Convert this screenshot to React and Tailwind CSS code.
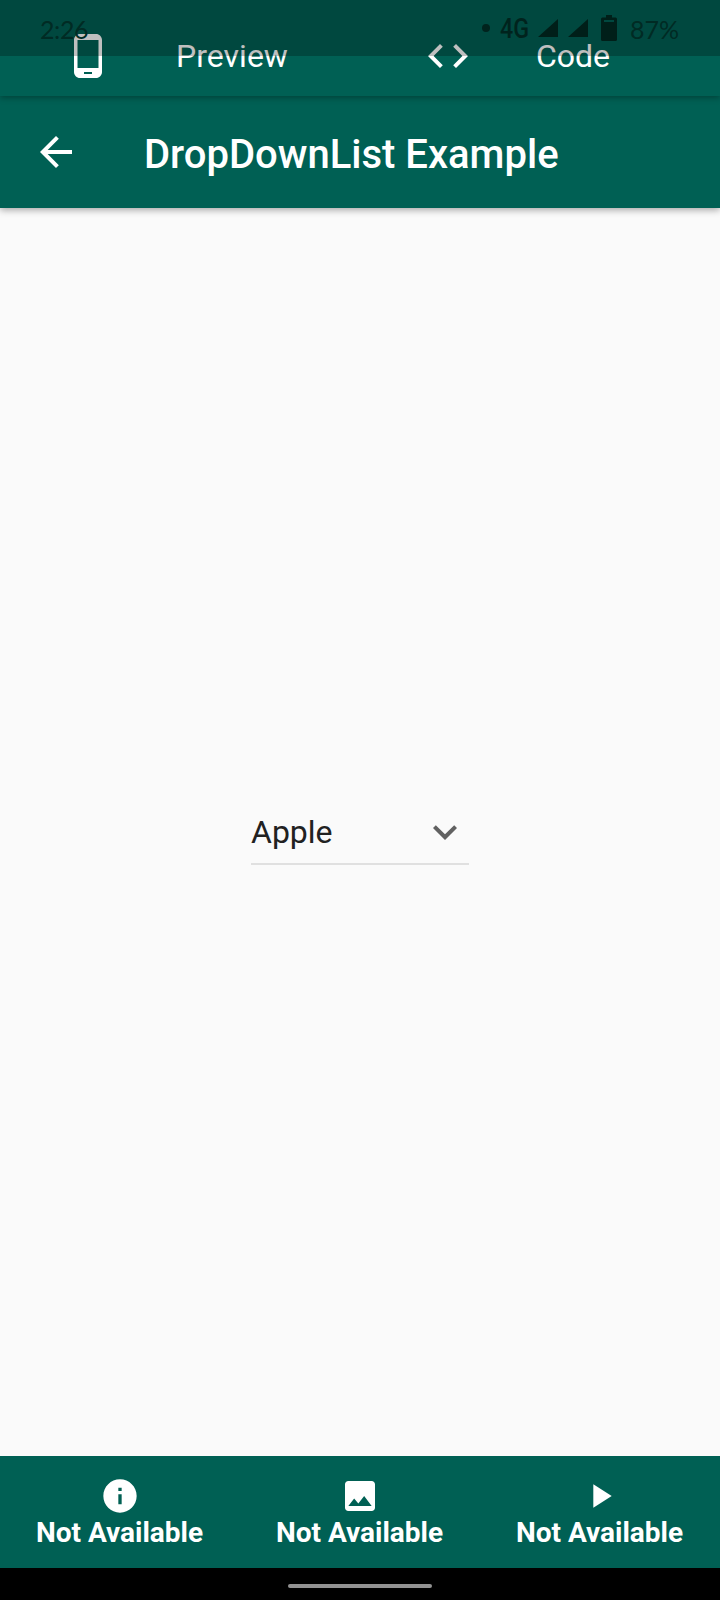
import React from "react";
import {
  MdPhoneAndroid,
  MdCode,
  MdArrowBack,
  MdExpandMore,
  MdInfo,
  MdImage,
  MdPlayArrow,
} from "react-icons/md";

function Signal() {
  return (
    <svg className="h-[18px] w-5" viewBox="0 0 20 18" fill="currentColor">
      <path d="M0 18 20 0v18z" />
    </svg>
  );
}

function StatusBar() {
  return (
    <div className="absolute inset-x-0 top-0 flex h-14 items-center bg-black/25 pl-10 pr-[41px] font-['Lato'] text-[#002b24]">
      <span className="mt-[2px] text-[25px] leading-none tracking-[-0.4px]">2:26</span>
      <div className="ml-auto flex items-center text-[#001f19]">
        <span className="mr-[10px] size-2 rounded-full bg-[#00231d]" />
        <span className="mr-[9px] mt-[2px] w-[29px] font-['Roboto'] text-[28px] font-medium leading-none text-[#00231d]">
          <span className="inline-block origin-left scale-x-[0.83]">4G</span>
        </span>
        <Signal />
        <span className="w-[10px]" />
        <Signal />
        <svg className="ml-[13px] h-[26px] w-4" viewBox="0 0 16 26" fill="currentColor">
          <path d="M5 0h6v2.500h3.500A1.500 1.500 0 0 1 16 4v20.500a1.500 1.500 0 0 1-1.500 1.500h-13A1.500 1.500 0 0 1 0 24.500V4a1.500 1.500 0 0 1 1.500-1.500H5zM3 5v2h10V5z" fillRule="evenodd" />
        </svg>
        <span className="ml-[13px] mt-[2px] text-[25px] leading-none text-[#002b24]">87%</span>
      </div>
    </div>
  );
}

function ModeTab({ icon: Icon, label, className }) {
  return (
    <div className={"flex w-1/2 items-center text-[32px] leading-none text-white " + className}>
      <Icon className="size-12 shrink-0" />
      <span className="flex-1 text-center">{label}</span>
    </div>
  );
}

const actions = [
  { icon: MdInfo, id: "info" },
  { icon: MdImage, id: "image" },
  { icon: MdPlayArrow, id: "play" },
];

export default function App() {
  return (
    <div className="relative flex h-[1600px] w-[720px] flex-col overflow-hidden bg-[#fafafa] font-['Roboto',sans-serif]">
      <header className="relative z-20 flex h-24 shrink-0 items-start bg-[#006054] pt-8 shadow-[0_2px_6px_rgba(0,0,0,0.3)]">
        <ModeTab icon={MdPhoneAndroid} label="Preview" className="pl-16 pr-[8px]" />
        <ModeTab icon={MdCode} label="Code" className="pl-16 pr-[46px]" />
      </header>

      <div className="relative z-10 flex h-28 shrink-0 items-center bg-[#006054] pl-8 text-white shadow-[0_2px_7px_rgba(0,0,0,0.35)]">
        <MdArrowBack className="size-12" />
        <h1 className="ml-16 mt-[5px] text-[40px] font-medium leading-none">DropDownList Example</h1>
      </div>

      <main className="flex flex-1 flex-col items-center pt-[592px]">
        <button className="flex h-[65px] w-[218px] items-start justify-between border-b-2 border-[#e0e0e0] pt-2">
          <span className="mt-[8px] text-[32px] leading-none text-[#212121]">Apple</span>
          <MdExpandMore className="size-12 text-[#616161]" />
        </button>
      </main>

      <nav className="flex h-28 shrink-0 bg-[#006054] text-white">
        {actions.map(({ icon: Icon, id }) => (
          <div key={id} className="flex flex-1 flex-col items-center pt-5">
            <Icon className="size-10" />
            <span className="mt-[3px] pr-px text-[28px] font-bold leading-none">Not Available</span>
          </div>
        ))}
      </nav>

      <div className="flex h-8 shrink-0 justify-center bg-black pt-4">
        <div className="h-1 w-36 rounded-full bg-[#929292]" />
      </div>

      <div className="absolute inset-x-0 top-0 z-30">
        <StatusBar />
      </div>
    </div>
  );
}
